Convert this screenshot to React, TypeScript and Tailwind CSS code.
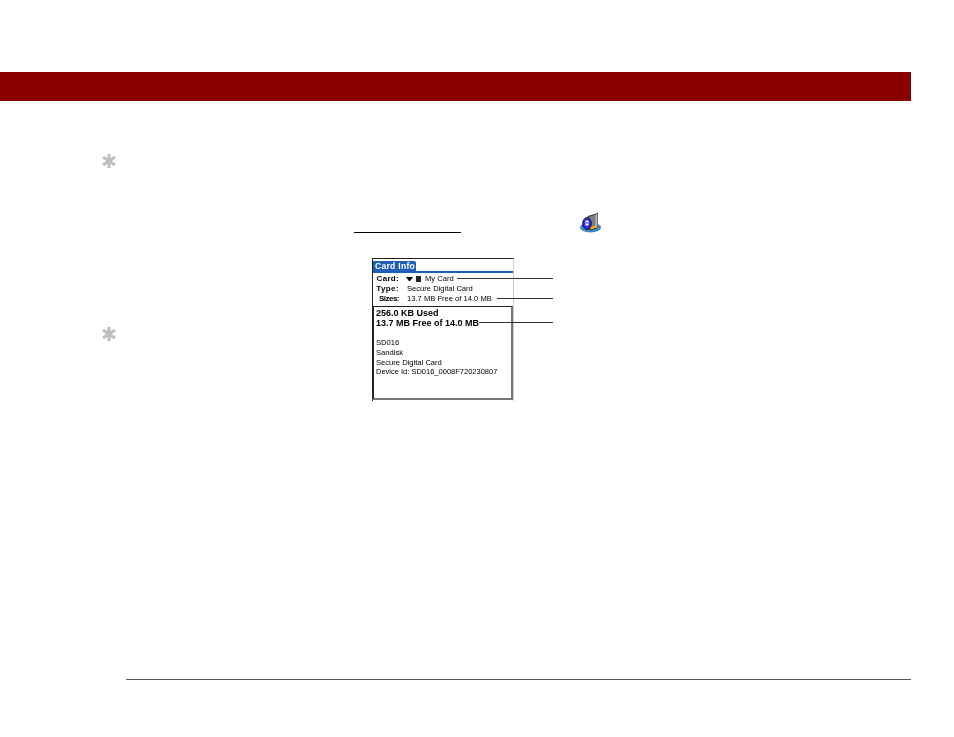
import React from "react";

const Asterisk = () => (
  <svg width="14" height="14" viewBox="0 0 14 14" className="block blur-[0.3px]">
    <g stroke="#bfbfbf" strokeWidth="3.2">
      <line x1="7" y1="0" x2="7" y2="14" />
      <line x1="1" y1="3" x2="13" y2="11" />
      <line x1="13" y1="3" x2="1" y2="11" />
    </g>
  </svg>
);

const MediaIcon = () => (
  <svg width="22" height="22" viewBox="0 0 22 22" className="block">
    <ellipse cx="10.5" cy="15.5" rx="10.5" ry="5" fill="#3f87c8" />
    <path d="M8 4.5 L16 2 L17.5 1 L17.5 15.5 L10 18 Z" fill="#7d7d7d" stroke="#1c1c1c" strokeWidth="0.9" />
    <path d="M15.5 2.5 L17.5 1 L17.5 15 L15.5 16 Z" fill="#b8b8b8" />
    <path d="M10.5 15 L17 13 L17 15.5 L10.5 17.5 Z" fill="#f2ae1c" />
    <ellipse cx="7" cy="11.5" rx="4.3" ry="5.8" fill="#2a2aee" stroke="#0c0c40" strokeWidth="1" />
    <rect x="5.5" y="8.5" width="3" height="5" fill="#fff" />
    <rect x="6.5" y="10" width="1" height="2" fill="#2a2aee" />
  </svg>
);

const Leader = ({ className }: { className: string }) => (
  <div className={`absolute h-px bg-[#333] right-[-40px] ${className}`} />
);

const CardInfo = () => (
  <div className="relative w-[142px] h-[143px] ml-[18px] mt-[25px] bg-white text-black font-['Liberation_Sans',sans-serif] text-[7.6px] leading-[10px] whitespace-nowrap border-t border-t-[#222] border-r border-r-[#ccc] border-l border-l-[#222]">
    <div className="blur-[0.35px]">
      <div className="pt-[2px]">
        <div className="border-b-2 border-b-[#1f5fb8] h-[12px]">
          <div className="w-[43px] h-[11px] bg-[#1f5fb8] text-white font-bold text-[8.5px] leading-[11px] pl-[2px] rounded-tr-[2px] tracking-[0.3px]">
            Card Info
          </div>
        </div>
      </div>
      <div className="h-[33px] pt-[1px]">
        <div className="flex items-center h-[10px]">
          <span className="w-[26px] text-right font-bold text-[8px] tracking-[0.3px]">Card:</span>
          <span className="w-[7px] ml-[7px] h-0 border-x-[3.5px] border-x-transparent border-t-[4px] border-t-black" />
          <span className="w-[5px] h-[6px] ml-[3px] bg-[#222]" />
          <span className="ml-[4px]">My Card</span>
        </div>
        <div className="flex items-center h-[10px]">
          <span className="w-[26px] text-right font-bold text-[8px] tracking-[0.4px]">Type:</span>
          <span className="ml-[8px]">Secure Digital Card</span>
        </div>
        <div className="flex items-center h-[10px]">
          <span className="w-[26px] text-right font-bold text-[8px] tracking-[-0.5px]">Sizes:</span>
          <span className="ml-[8px]">13.7 MB Free of 14.0 MB</span>
        </div>
      </div>
      <div className="h-[94px] -ml-px border-t border-t-[#222] border-l-2 border-l-[#222] border-r-2 border-r-[#777] border-b-2 border-b-[#777] pl-[2px] pt-[2px] leading-[9.7px]">
        <div className="font-bold text-[9px]">256.0 KB Used</div>
        <div className="font-bold text-[9px]">13.7 MB Free of 14.0 MB</div>
        <div className="h-[9.7px]" />
        <div className="text-[7.6px]">SD016</div>
        <div className="text-[7.6px]">Sandisk</div>
        <div className="text-[7.6px]">Secure Digital Card</div>
        <div className="text-[7.5px]">Device Id: SD016_0008F720230807</div>
      </div>
    </div>
    <Leader className="top-[19px] left-[84px]" />
    <Leader className="top-[39px] left-[124px]" />
    <Leader className="top-[63px] left-[106px]" />
  </div>
);

export default function App() {
  return (
    <div className="w-[954px] h-[737px] bg-white flex flex-col">
      <div className="mt-[72px] w-[911px] h-[29px] bg-[#8a0000]" />
      <div className="flex-1 flex">
        <div className="w-[354px] pl-[102px] pt-[53px] flex flex-col gap-[159px]">
          <Asterisk />
          <Asterisk />
        </div>
        <div className="flex flex-col">
          <div className="flex items-end mt-[111px] h-[21px]">
            <div className="w-[107px] h-px bg-black" />
            <div className="ml-[119px] mb-[-1px]">
              <MediaIcon />
            </div>
          </div>
          <CardInfo />
        </div>
      </div>
      <div className="ml-[126px] w-[785px] h-px bg-[#555] mb-[57px]" />
    </div>
  );
}
